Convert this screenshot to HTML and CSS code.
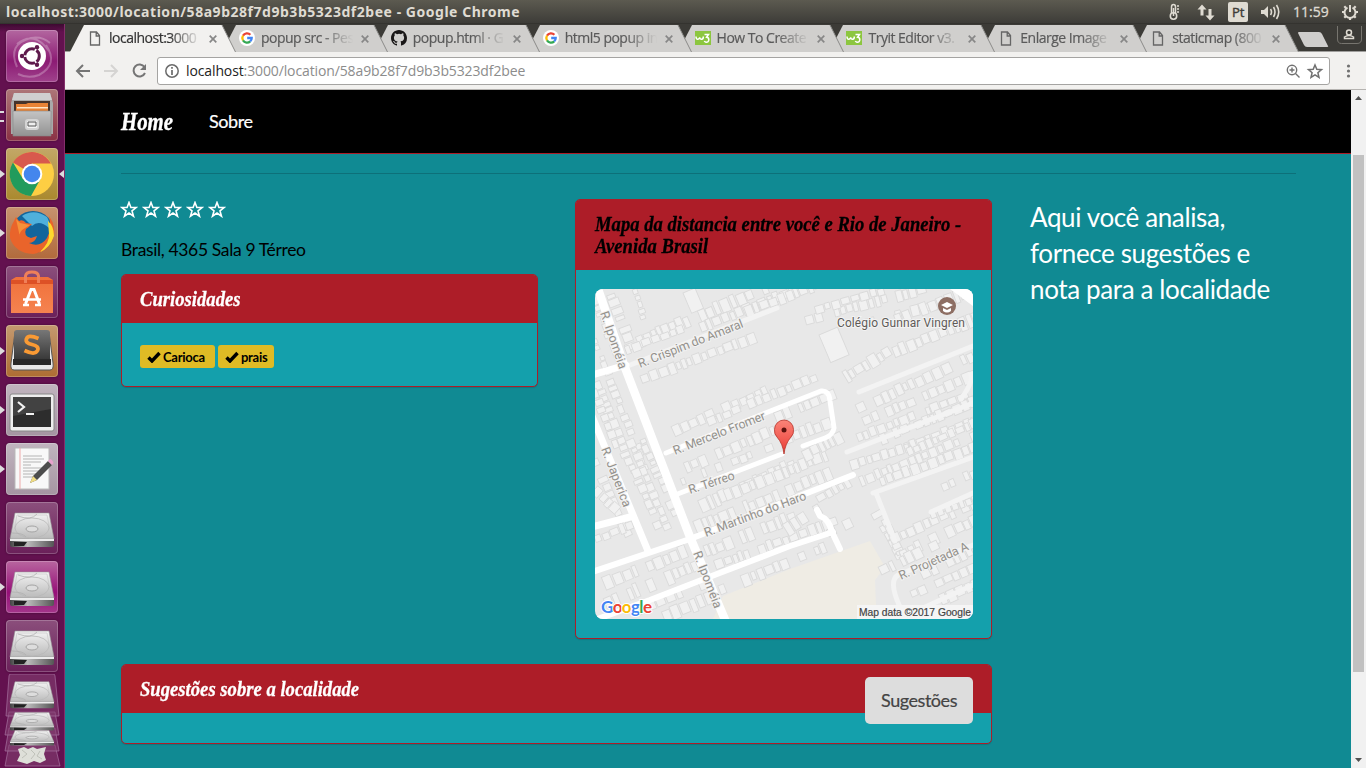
FILE: index.html
```html
<!DOCTYPE html>
<html lang="pt">
<head>
<meta charset="utf-8">
<title>localhost:3000/location/58a9b28f7d9b3b5323df2bee</title>
<link rel="stylesheet" href="styles.css">
</head>
<body>
<svg class="defs" width="0" height="0">
  <defs>
    <linearGradient id="metal" x1="0" y1="0" x2="0" y2="1"><stop offset="0" stop-color="#f4f4f4"/><stop offset="1" stop-color="#b9b9b9"/></linearGradient>
    <linearGradient id="steel" x1="0" y1="0" x2="0" y2="1"><stop offset="0" stop-color="#c4c4c4"/><stop offset="1" stop-color="#929292"/></linearGradient>
    <linearGradient id="side" x1="0" x2="1"><stop offset="0" stop-color="#444"/><stop offset=".4" stop-color="#bbb"/><stop offset="1" stop-color="#555"/></linearGradient>
    <linearGradient id="orange" x1="0" y1="0" x2="0" y2="1"><stop offset="0" stop-color="#f0703a"/><stop offset="1" stop-color="#f58350"/></linearGradient>
    <linearGradient id="dark" x1="0" y1="0" x2="0" y2="1"><stop offset="0" stop-color="#777"/><stop offset="1" stop-color="#2d2d2d"/></linearGradient>
    <linearGradient id="pin" x1="0" y1="0" x2="0" y2="1"><stop offset="0" stop-color="#fb8478"/><stop offset="1" stop-color="#ea3b35"/></linearGradient>
  </defs>
  <symbol id="drive" viewBox="0 0 46 36" preserveAspectRatio="none">
    <path d="M6 1H40L45 27H1Z" fill="url(#metal)" stroke="#999" stroke-width=".6"/>
    <path d="M8 3H38L42 24H4Z" fill="none" stroke="#c2c2c2" stroke-width=".6"/>
    <ellipse cx="23" cy="16" rx="17" ry="10" fill="none" stroke="#b8b8b8" stroke-width=".8"/>
    <path d="M9 4Q22 9 28 2M3 21Q14 21 17 25" fill="none" stroke="#b0b0b0" stroke-width=".8"/>
    <ellipse cx="23" cy="17" rx="6" ry="3" fill="#ddd" stroke="#a4a4a4"/>
    <path d="M1 27H45V33Q45 35 43 35H3Q1 35 1 33Z" fill="url(#side)"/>
    <path d="M1 27H45V29H1Z" fill="#ececec"/><path d="M5 30H18L15 34H5Z" fill="#222"/>
  </symbol>
  <symbol id="page" viewBox="0 0 12 15"><path d="M1.5 1H7.5L10.5 4.5V14H1.5ZM7.2 1V5H10.5" fill="none" stroke="#666" stroke-width="1.3"/></symbol>
  <symbol id="google" viewBox="0 0 16 16"><circle cx="8" cy="8" r="8" fill="#fff"/>
    <g fill="none" stroke-width="2.3"><path d="M11.4 4.7A4.7 4.7 0 0 0 4 5.6" stroke="#ea4335"/><path d="M4 5.6A4.7 4.7 0 0 0 4 10.4" stroke="#fbbc05"/><path d="M4 10.4A4.7 4.7 0 0 0 11.2 11.4" stroke="#34a853"/><path d="M8.2 8H12.7Q12.7 10.2 11.2 11.4" stroke="#4285f4"/></g></symbol>
  <symbol id="w3" viewBox="0 0 16 14"><rect width="16" height="14" fill="#8cc63f"/><path d="M1 5.5Q1 8.5 3 8.2Q4.7 8 4.7 6.3Q4.9 8.4 6.7 8.2Q8.5 8 8.3 5.500M9.500 3.500H13.500L11.600 6.200Q14 6.500 13.800 9Q13.400 11.400 11 11.200Q9.800 11 9.300 10" fill="none" stroke="#fff" stroke-width="1.5"/></symbol>
  <symbol id="github" viewBox="0 0 16 16"><path fill="#191717" d="M8 0C3.58 0 0 3.58 0 8c0 3.54 2.29 6.53 5.47 7.59.4.07.55-.17.55-.38 0-.19-.01-.82-.01-1.49-2.01.37-2.53-.49-2.69-.94-.09-.23-.48-.94-.82-1.13-.28-.15-.68-.52-.01-.53.63-.01 1.08.58 1.23.82.72 1.21 1.87.87 2.33.66.07-.52.28-.87.51-1.07-1.78-.2-3.64-.89-3.64-3.95 0-.87.31-1.59.82-2.15-.08-.2-.36-1.02.08-2.12 0 0 .67-.21 2.2.82a7.6 7.6 0 0 1 4 0c1.53-1.04 2.2-.82 2.2-.82.44 1.1.16 1.92.08 2.12.51.56.82 1.27.82 2.15 0 3.07-1.87 3.75-3.65 3.95.29.25.54.73.54 1.48 0 1.07-.01 1.93-.01 2.2 0 .21.15.46.55.38A8 8 0 0 0 16 8c0-4.42-3.58-8-8-8z"/></symbol>
  <symbol id="shape" viewBox="0 0 166 28"><path d="M0 28L14 1H152L165.500 28Z"/><path d="M152 1L165.500 28" fill="none" stroke="#8b8a88"/></symbol>
  <symbol id="close" viewBox="0 0 8 8"><path d="M.7.7L7.300 7.300M7.300.7L.7 7.300" stroke="#878787" stroke-width="1.700"/></symbol>
  <symbol id="star" viewBox="0 0 18 17"><path d="M9 1.500L10.900 6.500H16.200L12 9.900L13.500 15.200L9 12L4.500 15.200L6 9.900L1.800 6.500H7.100Z" fill="none" stroke="currentColor" stroke-width="1.600"/></symbol>
  <symbol id="check" viewBox="0 0 14 12"><path d="M1.500 6.500L5 10L12.500 2" fill="none" stroke="#000" stroke-width="3.400"/></symbol>
</svg>

<header class="titlebar">
  <span class="window-title">localhost:3000/location/58a9b28f7d9b3b5323df2bee - Google Chrome</span>
  <svg class="indicators" width="200" height="24" fill="none" stroke="#dfdbd2">
    <path d="M5.500 13V7Q5.500 4.500 7.500 4.500Q9.500 4.500 9.500 7V13" stroke-width="1.500"/><circle cx="7.500" cy="16" r="3.200" stroke-width="1.600"/><path d="M7.500 8V16M11 6H13M11 9H13M11 12H13" stroke-width="1.500"/>
    <path d="M36 4.500L31.500 9.500H34.500V15.500H37.500V9.500H40.500ZM44 20.500L39.500 15.500H42.500V9H45.500V15.500H48.500Z" fill="#dfdbd2" stroke="none"/>
    <rect x="62" y="2" width="20" height="20" rx="2" fill="#dfdbd2" stroke="none"/>
    <text x="66" y="17" class="ind-lang">Pt</text>
    <path d="M95 10H98L102 6V18L98 14H95Z" fill="#dfdbd2" stroke="none"/><path d="M104.500 9Q106.500 12 104.500 15M107.500 7Q110.500 12 107.500 17M110.500 5Q115 12 110.500 19" stroke-width="1.600"/>
    <text x="127" y="17" class="ind-clock">11:59</text>
    <path d="M181.500 7.600A5.500 5.500 0 1 0 186.500 7.600M184 5V12" stroke-width="2"/><path d="M176 12H178.500M189.500 12H192M178.300 17.700L180 16M189.700 17.700L188 16M184 17.500V20M178.300 6.300L180 8M189.700 6.300L188 8" stroke-width="2.200"/>
  </svg>
</header>

<div class="desktop">
<aside class="launcher">
  <div class="tile dash"><svg width="52" height="52"><g fill="none" stroke="#fff" stroke-opacity=".26" stroke-width="2"><path d="M11 37Q1 14 25 8Q36 6 44 13M40 15Q53 34 33 45Q22 49 12 44M11 14Q28 0 43 21"/></g><circle cx="26" cy="26" r="14" fill="#fff"/><circle cx="26" cy="26" r="7.300" fill="none" stroke="#5e1a4c" stroke-width="3" stroke-dasharray="13.500 1.800" stroke-dashoffset="7"/><g fill="#5e1a4c"><circle cx="16" cy="26" r="2.200"/><circle cx="31" cy="17.300" r="2.200"/><circle cx="31" cy="34.700" r="2.200"/></g></svg></div>
  <div class="tile files run two"><svg width="52" height="52"><path d="M8 4H44L47 14V45H5V14Z" fill="#a9a9a9"/><path d="M8 4H44L46 11H6Z" fill="#cfcfcf"/><path d="M8 12H44V23H8Z" fill="#46342b"/><path d="M10 15H20L22 14H42V22H10Z" fill="#e88336"/><path d="M11 18H42V19.500H11Z" fill="#ffe5c5"/><path d="M7 22H45V47H7Z" fill="url(#steel)" stroke="#888" stroke-width=".6"/><rect x="20" y="31" width="12" height="9" rx="2" fill="#f2f2f2" stroke="#d4d4d4" stroke-width="2"/><path d="M22 33H30V37H22Z" fill="#eee" stroke="#555"/></svg></div>
  <div class="tile chrome run active"><svg width="52" height="52"><circle cx="26" cy="26" r="22" fill="#fdce43"/><path d="M26 26L7 14.500A22 22 0 0 1 45 15.500H26Z" fill="#d8594d"/><path d="M7 14.500A22 22 0 0 0 25 48L34.500 31L26 26L17 31Z" fill="#219b5c"/><circle cx="26" cy="26" r="10.300" fill="#fff"/><circle cx="26" cy="26" r="8.300" fill="#4486ed"/></svg></div>
  <div class="tile firefox run"><svg width="52" height="52"><circle cx="27" cy="25" r="21" fill="#12659c"/><path d="M16 9Q28 1 41 10Q44 15 43 21Q33 12 26 19Z" fill="#4fb0dc"/><path d="M43 9Q51 20 47 32Q42 45 27 47Q9 46 4 31Q3 22 8 14L10 10L13 14Q17 12 20 16L26 17Q22 21 20 22Q17 29 25 31L31 29Q29 36 23 36Q34 41 41 31Q46 22 43 9Z" fill="#e9642b"/><path d="M42 14Q48 19 48 29Q44 41 34 45Q44 35 43 27Z" fill="#fed82e"/><path d="M10 12L14 16L24 18L19 21Q12 25 14 30Z" fill="#f69138"/></svg></div>
  <div class="tile software"><svg width="52" height="52"><path d="M5 14L10 11H42L47 14V47H5Z" fill="url(#orange)"/><path d="M5 14H47V18H5Z" fill="#dd5126"/><path d="M19.500 17V10Q20 6 26 6Q32 6 32.500 10V17" fill="none" stroke="#ef8059" stroke-width="3"/><path d="M19.500 38L25 23.500H28L33.500 38" fill="none" stroke="#fff" stroke-width="3"/><path d="M17 33.500H35M17 39H23M29 39H35" stroke="#fff" stroke-width="2.500"/></svg></div>
  <div class="tile sublime run"><svg width="52" height="52"><path d="M9 7L5 38Q4 45 8 45H44Q48 45 47 38L43 7Z" fill="#e9e9e9" stroke="#555"/><rect x="8" y="5" width="36" height="35" rx="3" fill="url(#dark)"/><path d="M7 34H45V40H7Z" fill="#292929"/><path d="M32.500 13.500Q22 9 20.500 14Q19 18 26 19.500Q33.500 21 31.500 25.500Q29 30.500 18.500 25.500" fill="none" stroke="#f99a34" stroke-width="3.800"/></svg></div>
  <div class="tile light run"><svg width="52" height="52"><rect x="4" y="10" width="44" height="37" rx="2" fill="#eee" stroke="#888"/><rect x="7" y="13" width="38" height="30" fill="#2d2d2d"/><path d="M7 13H45V25L7 32Z" fill="#424242"/><path d="M12 18L18 23L12 28M20 30H28" fill="none" stroke="#f3f3f3" stroke-width="2.200"/></svg></div>
  <div class="tile light run"><svg width="52" height="52"><rect x="9" y="5" width="34" height="41" fill="#f8f8f8" stroke="#b9b9b9"/><path d="M14 5V46" stroke="#eaa"/><path d="M17 13H36M17 16H38M17 19H35M17 22H25M17 25H36M17 28H38M17 31H30M17 34H27" stroke="#b4b4b4"/><path d="M24 40L27 33L42 18L46 22L31 37Z" fill="#4c4c4c"/><path d="M42 18L44 16Q46 16 47.500 20L46 22Z" fill="#e7a2cd"/><path d="M24 40L27 33L31 37Z" fill="#f0dc83"/></svg></div>
  <div class="tile disk"><svg width="46" height="36"><use href="#drive"/></svg></div>
  <div class="tile disk bright run"><svg width="46" height="36"><use href="#drive"/></svg></div>
  <div class="tile disk"><svg width="46" height="36"><use href="#drive"/></svg></div>
  <svg class="folded" width="64" height="94">
    <g fill="#843f72" fill-opacity=".6" stroke="#a672a0" stroke-width=".7"><path d="M5 92L9 71H55L60 92Z"/><path d="M5 77L9 54H55L59 77Z"/><path d="M5 61L9 38H55L59 61Z"/><path d="M6 42L9 2Q9 0 11 0H53Q55 0 55 2L59 42Z"/></g>
    <use href="#drive" x="9" y="7" width="46" height="28"/><use href="#drive" x="9" y="38" width="46" height="19"/><use href="#drive" x="9" y="56" width="46" height="16"/>
    <path d="M18 75L24 73L28 75L33 73L37 75L46 73L44 80L46 86L40 89L34 87L27 90L17 87L20 81Z" fill="#dedfd9"/><path d="M22 76L27 80L22 84M31 76L35 80L31 85M40 77L37 82L42 85" stroke="#bfc1b9" fill="none"/>
  </svg>
</aside>

<div class="browser">
  <div class="tabs">
    <div class="tab on"><svg class="bg"><use href="#shape"/></svg><svg class="fav doc"><use href="#page"/></svg><span class="label">localhost:3000</span><svg class="x"><use href="#close"/></svg></div>
    <div class="tab"><svg class="bg"><use href="#shape"/></svg><svg class="fav"><use href="#google"/></svg><span class="label">popup src - Pes</span><svg class="x"><use href="#close"/></svg></div>
    <div class="tab"><svg class="bg"><use href="#shape"/></svg><svg class="fav"><use href="#github"/></svg><span class="label">popup.html · G</span><svg class="x"><use href="#close"/></svg></div>
    <div class="tab"><svg class="bg"><use href="#shape"/></svg><svg class="fav"><use href="#google"/></svg><span class="label">html5 popup in</span><svg class="x"><use href="#close"/></svg></div>
    <div class="tab"><svg class="bg"><use href="#shape"/></svg><svg class="fav"><use href="#w3"/></svg><span class="label">How To Create</span><svg class="x"><use href="#close"/></svg></div>
    <div class="tab"><svg class="bg"><use href="#shape"/></svg><svg class="fav"><use href="#w3"/></svg><span class="label">Tryit Editor v3.</span><svg class="x"><use href="#close"/></svg></div>
    <div class="tab"><svg class="bg"><use href="#shape"/></svg><svg class="fav doc"><use href="#page"/></svg><span class="label">Enlarge Image</span><svg class="x"><use href="#close"/></svg></div>
    <div class="tab"><svg class="bg"><use href="#shape"/></svg><svg class="fav doc"><use href="#page"/></svg><span class="label">staticmap (800</span><svg class="x"><use href="#close"/></svg></div>
    <svg class="tab-tools" width="74" height="28"><path d="M2 8H22Q24 8 25 10L31 22Q32 23 30 23H10Q8 23 7 21L1 9Q1 8 2 8Z" fill="#cfcecc"/><path d="M40.500 2V15Q40.500 19.500 44.500 19.500H60Q64.500 19.500 64.500 15V2" fill="none" stroke="#77756f"/><circle cx="52" cy="8.500" r="2.500" fill="none" stroke="#dfdbd2" stroke-width="1.500"/><path d="M47.500 14.500V13Q52 10 56.500 13V14.500Z" fill="none" stroke="#dfdbd2" stroke-width="1.500"/></svg>
  </div>
  <div class="toolbar">
    <svg width="92" height="36" fill="none" stroke="#757575" stroke-width="2"><path d="M25 18H12M18 12L12 18L18 24"/><path d="M39 18H52M46 12L52 18L46 24" stroke="#d5d4d2"/><path d="M79.500 14A6 6 0 1 0 80 20"/><path d="M81 11V17H75Z" fill="#757575" stroke="none"/></svg>
    <div class="omnibox">
      <svg width="28" height="26" fill="none" stroke="#6b6b6b"><circle cx="14" cy="13" r="6.200" stroke-width="1.500"/><path d="M14 12V17M14 9V10.700" stroke-width="1.700"/></svg>
      <span class="url"><b>localhost</b>:3000/location/58a9b28f7d9b3b5323df2bee</span>
      <svg class="zoom" width="43" height="26" fill="none" stroke="#707070"><circle cx="6" cy="12" r="4.700" stroke-width="1.400"/><path d="M9.500 15.500L13.500 19.500M3.500 12H8.500M6 9.500V14.500" stroke-width="1.400"/><path d="M29 7L30.800 11.300L35.500 11.700L31.900 14.700L33 19.300L29 16.800L25 19.300L26.100 14.700L22.500 11.700L27.200 11.300Z" stroke-width="1.500"/></svg>
    </div>
    <svg width="36" height="36" fill="#717171"><circle cx="18.500" cy="13" r="1.600"/><circle cx="18.500" cy="18" r="1.600"/><circle cx="18.500" cy="23" r="1.600"/></svg>
  </div>

  <div class="viewport">
    <div class="site">
      <nav class="navbar"><a class="brand"><span>Home</span></a><a class="nav-link">Sobre</a></nav>
      <hr class="rule">
      <div class="grid">
        <main class="main">
          <div class="pair">
            <section class="left">
              <div class="stars"><svg><use href="#star"/></svg><svg><use href="#star"/></svg><svg><use href="#star"/></svg><svg><use href="#star"/></svg><svg><use href="#star"/></svg></div>
              <p class="address">Brasil, 4365 Sala 9 Térreo</p>
              <div class="card">
                <h3 class="head"><span>Curiosidades</span></h3>
                <div class="tags"><span class="tag"><svg><use href="#check"/></svg>Carioca</span><span class="tag"><svg><use href="#check"/></svg>prais</span></div>
              </div>
            </section>
            <section class="card mapcard">
              <h3 class="head black"><span>Mapa da distancia entre você e Rio de Janeiro -</span><br><span>Avenida Brasil</span></h3>
              <div class="mapwrap">
                <svg class="map" width="378" height="330" viewBox="0 0 378 330">
                  <rect width="378" height="330" fill="#e8e8e8"/>
                  <path d="M118 330L128 307L195 280L275 252L290 278L280 291L281 316L262 330Z" fill="#efece4"/>
                  <g id="buildings" fill="#f1f1f1" stroke="#dadada" stroke-width=".9"></g>
                  <g fill="none" stroke="#f3f3f3" stroke-width="5" stroke-linecap="round" stroke-linejoin="round">
                    <path d="M30 78L182 19M264 103L378 57M252 163L378 114M278 204L378 168M281 204L300 252M336 223L378 204M305 318Q293 292 303 286L378 256M315 325L378 296M366 110Q379 92 376 85"/>
                  </g>
                  <g fill="none" stroke="#fff" stroke-width="7" stroke-linecap="round" stroke-linejoin="round">
                    <path d="M2 -3L29 76L95 248L131 333" stroke-width="8.500"/>
                    <path d="M-3 86L31 76M-3 127L53 262M-3 238L35 228" stroke-width="7"/>
                    <path d="M-3 283L95 250L258 186M-3 332L55 311L122 285L195 257L238 243" stroke-width="6"/><path d="M222 221L225 227Q234 230 237 243L245 260" stroke-width="6"/>
                    <path d="M80 206L187 165M71 164L178 121L226 102Q234 101 235 112L239 139Q238 146 230 149L208 157" stroke-width="5"/>
                  </g>
                  <path d="M355 0H378V17Z" fill="#fff"/>
                  <g class="road">
                    <text transform="translate(5 24) rotate(71)" textLength="60">R. Ipoméia</text>
                    <text transform="translate(45 79) rotate(-21.500)" textLength="112">R. Crispim do Amaral</text>
                    <text transform="translate(80 166) rotate(-21.500)" textLength="98">R. Mercelo Fromer</text>
                    <text transform="translate(6 160) rotate(69)" textLength="63">R. Japerica</text>
                    <text transform="translate(95 205) rotate(-18)" textLength="48">R. Térreo</text>
                    <text transform="translate(111 248) rotate(-20.500)" textLength="108">R. Martinho do Haro</text>
                    <text transform="translate(98 264) rotate(69)" textLength="60">R. Ipoméia</text>
                    <text transform="translate(306 291) rotate(-24)" textLength="75">R. Projetada A</text>
                  </g>
                  <circle cx="352" cy="17" r="9" fill="#8d6e63"/><path d="M346 16L352 13L358 16L352 19ZM348 19V22Q352 25 356 22V19L352 21Z" fill="#fff"/>
                  <text class="poi" x="242" y="38" textLength="128">Colégio Gunnar Vingren</text>
                  <path d="M189 165Q188 155 182 148Q179 145 179.500 140.500A9.500 9.500 0 0 1 198.500 140.500Q199 145 196 148Q190 155 189 165Z" fill="url(#pin)" stroke="#b5332b" stroke-width=".8"/><circle cx="189" cy="141" r="2.500" fill="#5b120e"/>
                  <rect x="262" y="316" width="116" height="14" fill="#f5f5f5"/>
                  <text class="attrib" x="264" y="327" textLength="112" lengthAdjust="spacingAndGlyphs">Map data ©2017 Google</text>
                  <text class="logo" x="6" y="324" textLength="51"><tspan fill="#4285f4">G</tspan><tspan fill="#ea4335">o</tspan><tspan fill="#fbbc05">o</tspan><tspan fill="#4285f4">g</tspan><tspan fill="#34a853">l</tspan><tspan fill="#ea4335">e</tspan></text>
                </svg>
              </div>
            </section>
          </div>
          <section class="card wide">
            <h3 class="head"><span>Sugestões sobre a localidade</span></h3>
            <button class="btn">Sugestões</button>
            <div class="empty"></div>
          </section>
        </main>
        <p class="intro">Aqui você analisa,<br>fornece sugestões e<br>nota para a localidade</p>
      </div>
    </div>
    <div class="scroll"><svg width="15" height="15"><path d="M4 10L7.500 6L11 10Z" fill="#505050"/></svg><div class="thumb"></div><svg width="15" height="15"><path d="M4 5L7.500 9L11 5Z" fill="#505050"/></svg></div>
  </div>
</div>
</div>
<script src="map.js"></script>
</body>
</html>
```

FILE: styles.css
```css
* { box-sizing: border-box; }
body { margin: 0; width: 1366px; height: 768px; overflow: hidden; display: flex; flex-direction: column; font-family: "Open Sans", sans-serif; }
.defs { position: absolute; }
svg { display: block; flex: none; }

.titlebar { height: 24px; flex: none; display: flex; justify-content: space-between; align-items: center; padding-left: 6px; background: linear-gradient(#5c5a50, #3d3c38); border-bottom: 1px solid #34332f; color: #dfdbd2; }
.window-title { font: bold 14px/22px "Noto Sans", sans-serif; letter-spacing: .53px; white-space: nowrap; }
.ind-lang { font: 13px "Open Sans", sans-serif; fill: #3d3c38; stroke: #3d3c38; stroke-width: .4px; }
.ind-clock { font: 14px "Open Sans", sans-serif; fill: #dfdbd2; stroke: #dfdbd2; stroke-width: .3px; }

.desktop { flex: 1; min-height: 0; display: flex; }
.launcher { width: 65px; flex: none; display: flex; flex-direction: column; align-items: center; gap: 7px; padding: 6px 1px 0 0; background: linear-gradient(#3d0a31, #63114f 8px); border-right: 1px solid #842f6b; }
.tile { position: relative; width: 52px; height: 52px; flex: none; border-radius: 4px; box-shadow: inset 0 0 0 1px #ffffff38, 0 0 2px #3b0a30; background: linear-gradient(#8b4f7c, #6a2059); }
.tile.dash { background: linear-gradient(#b367a0, #8c1b74 60%, #a0428c); }
.tile.files { background: linear-gradient(#ad7678, #8a3144); }
.tile.chrome { background: linear-gradient(#c3a767, #aa892e); }
.tile.firefox { background: linear-gradient(#c7936f, #b16a3c); }
.tile.sublime { background: linear-gradient(#c49a70, #ae6d33); }
.tile.light { background: linear-gradient(#c1b5bf, #a595a2); }
.tile.disk { display: flex; align-items: center; justify-content: center; padding-top: 4px; }
.tile.bright { background: linear-gradient(#b8669f, #960f78 60%, #a3368a); }
.run::before { content: ""; position: absolute; left: -6px; top: 22px; border: 4px solid transparent; border-left: 5px solid #ddd; border-right: 0; }
.run.two::before { top: 22px; width: 4px; height: 7px; border: 0; border-top: 2px solid #ddd; border-bottom: 2px solid #ddd; }
.active::after { content: ""; position: absolute; right: -6px; top: 22px; border: 4px solid transparent; border-right: 5px solid #ddd; border-left: 0; }
.folded { margin-top: -5px; }

.browser { flex: 1; min-width: 0; display: flex; flex-direction: column; }
.tabs { height: 28px; flex: none; display: flex; background: #3c3b37; padding-left: 5px; position: relative; border-bottom: 1px solid #a09f9d; }
.tab { position: relative; width: 151.9px; flex: none; display: flex; align-items: center; padding-left: 17px; z-index: 1; }
.tab .bg { position: absolute; left: 0; top: 0; width: 166px; height: 28px; fill: #d0cfcd; z-index: -1; }
.tab:nth-child(1) { z-index: 9; } .tab:nth-child(2) { z-index: 8; } .tab:nth-child(3) { z-index: 7; } .tab:nth-child(4) { z-index: 6; }
.tab:nth-child(5) { z-index: 5; } .tab:nth-child(6) { z-index: 4; } .tab:nth-child(7) { z-index: 3; }
.tab.on .bg { fill: #f2f1ef; }
.fav { width: 16px; height: 16px; margin-right: 6px; }
.fav.doc { height: 15px; margin-top: 1px; }
.label { width: 94px; flex: none; white-space: nowrap; font-size: 14px; letter-spacing: -.5px; color: #5a5a5a; -webkit-text-stroke: .2px; -webkit-mask-image: linear-gradient(90deg, #000 64%, transparent 98%); mask-image: linear-gradient(90deg, #000 64%, transparent 98%); }
.on .label { color: #333; }
.x { width: 8px; height: 8px; margin-left: 6px; margin-top: 2px; }
.tab-tools { margin-left: 12px; }

.toolbar { height: 38px; flex: none; display: flex; align-items: center; background: #f2f1ef; border-bottom: 1px solid #b6b4b1; }
.omnibox { height: 28px; flex: 1; display: flex; align-items: center; background: #fff; border: 1px solid #a5a4a2; border-radius: 3px; }
.url { flex: 1; font-size: 14px; color: #8c8c8c; letter-spacing: -.12px; white-space: nowrap; }
.url b { font-weight: normal; color: #222; }

.viewport { flex: 1; min-height: 0; display: flex; }
.site { flex: 1; background: #108a93; overflow: hidden; color: #000; font-family: Lato, sans-serif; }
.scroll { width: 15px; background: #f1f1f1; display: flex; flex-direction: column; }
.thumb { width: 11px; height: 517px; margin: 50px auto auto 2px; background: #c1c1c1; }

.navbar { height: 64px; display: flex; align-items: center; background: #000; border-bottom: 1px solid #ad1d28; padding-left: 56px; color: #fff; }
.brand, .head { font-family: "Liberation Serif", serif; font-style: italic; font-weight: bold; }
.brand { width: 88px; font-size: 26px; }
.brand span { display: inline-block; transform: scaleX(.8); transform-origin: 0 50%; -webkit-text-stroke: .4px; }
.nav-link { font-size: 18px; letter-spacing: -.4px; -webkit-text-stroke: .2px; padding-bottom: 2px; }
.rule { margin: 19px 55px 25px 56px; border: 0; border-top: 1px solid #0d7079; }
.grid { display: flex; padding-left: 56px; }
.main { width: 871px; flex: none; }
.pair { display: flex; gap: 37px; align-items: flex-start; }
.left, .mapcard { width: 417px; flex: none; }
.stars { display: flex; gap: 4px; margin: 2px 0 0 -1px; color: #fff; }
.stars svg { width: 18px; height: 17px; }
.address { margin: 20px 0 12px; height: 24px; font-size: 17.500px; line-height: 24px; letter-spacing: -.36px; white-space: nowrap; }
.card { border: 1px solid #ad1d28; border-radius: 5px; background: #14a0ac; position: relative; box-shadow: 0 1px 1px #0002; }
.head { margin: 0; background: #ad1d28; color: #fff; font-size: 21px; line-height: 22px; padding: 13px 18px 13px; height: 48px; white-space: nowrap; border-radius: 4px 4px 0 0; }
.head.black { color: #000; height: 70px; padding-left: 19px; }
.head span { display: inline-block; transform: scaleX(.888); transform-origin: 0 50%; -webkit-text-stroke: .3px; }
.tags { height: 63px; padding: 22px 18px 0; display: flex; gap: 3px; }
.tag { height: 23px; display: flex; align-items: center; gap: 2px; padding: 0 10px 0 7px; border-radius: 3px; background: #dfbb25; font-size: 13px; font-weight: bold; letter-spacing: -.25px; }
.tag:last-child { padding-right: 7px; }
.tag svg { width: 14px; height: 12px; }
.mapwrap { padding: 19px; }
.map { border-radius: 8px; }
.road text { font: 12.500px Roboto, sans-serif; fill: #94918c; stroke: #f2f2f2; stroke-width: 2px; paint-order: stroke; }
.poi { font: 12px Roboto, sans-serif; fill: #5f5b58; stroke: #f3f3f3; stroke-width: 2px; paint-order: stroke; }
.attrib { font: 10.500px "Liberation Sans", sans-serif; fill: #444; stroke: #444; stroke-width: .2px; }
.logo { font: bold 17px Lato, sans-serif; stroke: #fff; stroke-width: 2px; paint-order: stroke; }
.wide { margin-top: 25px; }
.btn { position: absolute; right: 18px; top: 12px; width: 108px; height: 47px; border: 0; border-radius: 5px; background: #ddd; color: #444; font: 18px Lato, sans-serif; letter-spacing: -.45px; padding: 0 0 2px; -webkit-text-stroke: .2px; }
.empty { height: 30px; }
.intro { margin: 0 0 0 38px; color: #fff; font-size: 26px; line-height: 36px; letter-spacing: -.38px; white-space: nowrap; }
```

FILE: map.js
```js
// Building footprints: each row is x1, y1, x2, y2, depth.
const rows = [
  [17,5,38,60,12],[40,0,50,30,7],[0,8,26,73,8],[0,50,12,80,7],
  [42,52,172,-2,15],[46,90,160,47,12],[30,60,85,40,9],[105,38,195,2,12],[150,22,230,-8,12],
  [210,30,325,0,12],[220,20,290,0,9],[268,34,330,18,12],[300,30,378,0,13],
  [298,62,378,30,15],[250,88,290,64,14],[262,120,378,66,12],[268,132,378,86,12],
  [262,148,378,103,10],[285,150,378,112,12],[310,158,378,132,12],[255,175,310,158,11],
  [3,92,38,180,10],[16,90,52,182,9],[0,100,22,160,9],[0,170,34,245,10],[0,200,25,222,12],
  [36,150,72,235,9],[48,150,82,225,9],[40,180,66,240,10],
  [78,142,176,98,11],[112,132,228,84,10],[180,128,235,106,13],[188,150,236,132,13],
  [90,178,180,140,12],[86,192,170,160,10],[92,222,200,175,16],[100,238,230,185,14],[130,206,232,165,13],
  [110,262,195,228,14],[120,276,240,232,12],[190,240,225,218,14],
  [0,298,88,262,14],[10,314,100,276,15],[40,322,105,295,13],[68,327,115,308,15],[124,300,230,258,13],
  [0,250,36,236,11],[208,166,240,150,12],[222,210,250,194,10],[232,243,255,232,12],
  [265,192,378,146,11],[285,192,378,158,12],[312,162,378,134,10],
  [282,222,306,265,11],[290,230,305,262,8],[300,248,378,214,12],[305,265,378,231,14],[340,200,378,184,11],
  [285,282,340,255,12],[326,285,378,260,14],[316,305,378,278,10],[345,310,378,295,13],[335,225,378,210,10]
];
let seed = 17;
const rnd = () => (seed = (seed * 16807) % 2147483647) / 2147483647;
const group = document.getElementById("buildings");
for (const [x1, y1, x2, y2, depth] of rows) {
  const len = Math.hypot(x2 - x1, y2 - y1);
  const angle = Math.atan2(y2 - y1, x2 - x1) * 180 / Math.PI;
  for (let p = 0; p < len;) {
    const w = 4 + rnd() * 5;
    const h = depth * (0.6 + rnd() * 0.4);
    if (rnd() > 0.12) {
      const r = document.createElementNS("http://www.w3.org/2000/svg", "rect");
      r.setAttribute("x", p);
      r.setAttribute("y", -h / 2 + rnd() * 2);
      r.setAttribute("width", w);
      r.setAttribute("height", h);
      r.setAttribute("transform", `translate(${x1} ${y1}) rotate(${angle})`);
      group.appendChild(r);
    }
    p += w + 0.8 + rnd() * 1.5;
  }
}
const lots = [[88, 4, 13, 22], [224, 46, 20, 30]];
for (const [x, y, w, h] of lots) {
  const r = document.createElementNS("http://www.w3.org/2000/svg", "rect");
  r.setAttribute("width", w);
  r.setAttribute("height", h);
  r.setAttribute("transform", `translate(${x} ${y}) rotate(-23)`);
  group.appendChild(r);
}
```
